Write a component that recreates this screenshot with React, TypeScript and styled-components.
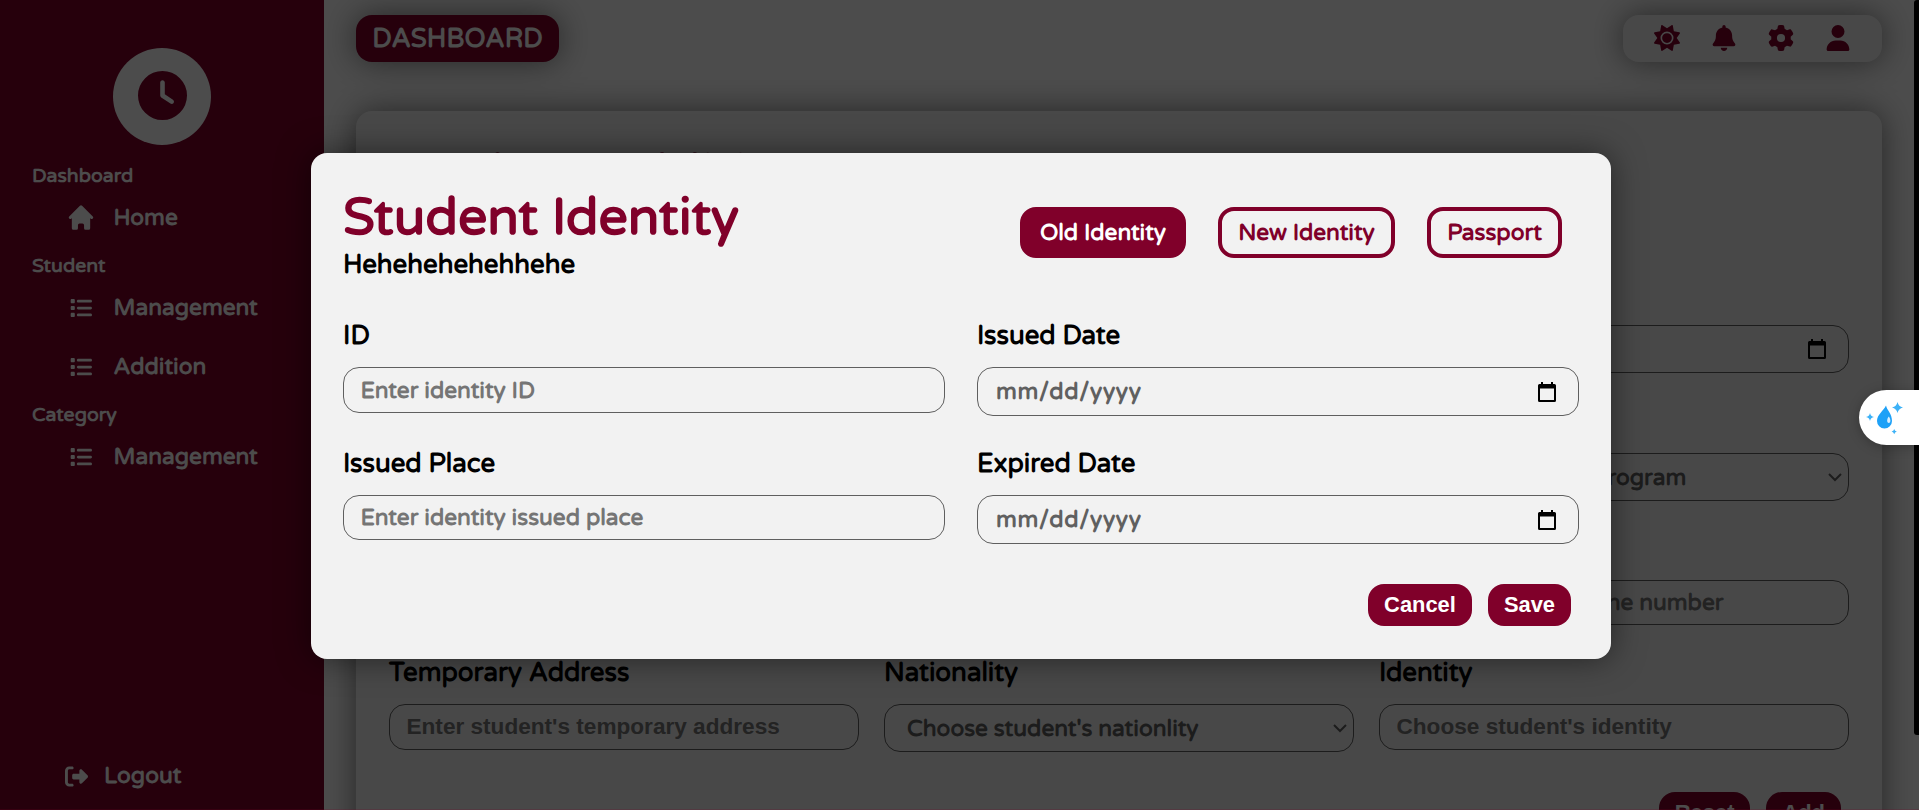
import React from "react";
import styled, { createGlobalStyle, css } from "styled-components";
import { FaSun, FaBell, FaGear, FaUser, FaList, FaRightFromBracket, FaClock } from "react-icons/fa6";
import { HiHome } from "react-icons/hi";

const maroon = "#80002a";
const round = `"Varela Round", "Open Sans", sans-serif`;
const arial = `Arial, "Liberation Sans", sans-serif`;

const GlobalStyle = createGlobalStyle`
  * { box-sizing: border-box; }
  html, body { margin: 0; height: 100%; overflow: hidden; }
  body { font-family: ${round}; font-weight: 700; background: #fff; color: #000; }
  h1, p { margin: 0; }
`;

const Page = styled.div`
  display: flex;
  height: 810px;
  overflow: hidden;
`;

/* Sidebar */
const Sidebar = styled.aside`
  width: 324px;
  flex: none;
  padding: 48px 0 0;
  background: ${maroon};
  color: #fff;
  display: flex;
  flex-direction: column;
`;
const Logo = styled.div`
  width: 98px;
  height: 97px;
  margin: 0 auto 13px;
  border-radius: 50%;
  background: #fff;
  color: ${maroon};
  display: flex;
  align-items: center;
  justify-content: center;
  svg { width: 49px; height: 49px; margin-top: -2px; }
`;
const GroupLabel = styled.div`
  height: 30px;
  padding: 5px 0 0 32px;
  line-height: 27px;
  font-size: 19.5px;
`;
const NavItem = styled.a`
  height: 59.7px;
  padding-left: 68px;
  display: flex;
  align-items: center;
  gap: 19.5px;
  font-size: 22.7px;
  line-height: 30px;
  svg { width: 26px; flex: none; }
`;
const Logout = styled.a`
  margin-top: auto;
  padding: 0 0 19px 65px;
  display: flex;
  align-items: center;
  gap: 16px;
  font-size: 22.7px;
  line-height: 30px;
`;

/* Main area */
const Main = styled.main`
  flex: 1;
  padding: 15px 37px 0 32px;
  background: #fff;
`;
const TopBar = styled.header`
  display: flex;
  justify-content: space-between;
  margin-bottom: 49px;
`;
const lifted = css`box-shadow: 0 0 32px rgba(0, 0, 0, 0.5);`;
const PageBadge = styled.div`
  height: 47px;
  width: 203px;
  border-radius: 16px;
  background: ${maroon};
  color: #fff;
  font-size: 26px;
  line-height: 47px;
  text-align: center;
  ${lifted}
`;
const Tools = styled.div`
  height: 47px;
  width: 259px;
  padding: 0 31px 1px;
  border-radius: 16px;
  background: #f2f2f2;
  color: ${maroon};
  font-size: 26px;
  display: flex;
  align-items: center;
  justify-content: space-between;
  ${lifted}
`;
const Card = styled.section`
  height: 800px;
  padding: 32px 33px 0;
  border-radius: 16px;
  background: #f2f2f2;
  ${lifted}
`;
const Title = styled.h1`
  font-size: 51.9px;
  line-height: 64px;
  font-weight: 700;
  color: ${maroon};
`;
const Subtitle = styled.p`
  font-size: 25.9px;
  line-height: 30px;
`;
const CardHeader = styled.div`height: 134px;`;
const CardGrid = styled.div`
  display: grid;
  grid-template-columns: repeat(3, 1fr);
  grid-template-rows: 128px 127px 124px 136px;
  column-gap: 25px;
`;
const Field = styled.label`
  display: flex;
  flex-direction: column;
`;
const Caption = styled.span`
  font-size: 25.9px;
  line-height: 32px;
  padding-top: 1px;
  margin-bottom: 15px;
  white-space: nowrap;
`;
const box = css`
  width: 100%;
  border: 1px solid #5f5f5f;
  border-radius: 16px;
  background: transparent;
  font-size: 22.7px;
  font-weight: 700;
`;
const TextInput = styled.input<{ $plain?: boolean; $height: number }>`
  ${box}
  height: ${(p) => p.$height}px;
  padding: 0 16.5px;
  outline: none;
  font-family: ${(p) => (p.$plain ? arial : round)};
  font-size: ${(p) => (p.$plain ? 22.6 : 22.7)}px;
  &::placeholder { color: #757575; opacity: 1; }
`;
const Picker = styled.div<{ $height: number; $left: number; $right: number; $spaced?: boolean }>`
  ${box}
  height: ${(p) => p.$height}px;
  padding: 0 ${(p) => p.$right}px 0 ${(p) => p.$left}px;
  display: flex;
  align-items: center;
  justify-content: space-between;
  color: #606060;
  letter-spacing: ${(p) => (p.$spaced ? "0.7px" : "0")};
  svg { flex: none; }
`;
const Actions = styled.div<{ $right: number }>`
  display: flex;
  justify-content: flex-end;
  gap: 16px;
  padding-right: ${(p) => p.$right}px;
`;
const Action = styled.button`
  height: 42px;
  padding: 0 16px;
  border: 0;
  border-radius: 16px;
  background: ${maroon};
  color: #fff;
  font: 700 21.9px ${arial};
`;

/* Modal */
const Backdrop = styled.div`
  position: absolute;
  inset: 0;
  width: 1919px;
  height: 810px;
  background: rgba(0, 0, 0, 0.7);
  border-bottom: 1px solid rgba(128, 0, 42, 0.2);
  padding: 153px 0 0 311px;
`;
const Modal = styled.section`
  width: 1300px;
  height: 506px;
  padding: 33px 32px 33px;
  border-radius: 16px;
  background: #f2f2f2;
  box-shadow: 0 0 32px rgba(0, 0, 0, 0.5);
`;
const ModalHeader = styled.div`
  display: flex;
  justify-content: space-between;
  height: 133px;
`;
const Tabs = styled.div`
  display: flex;
  gap: 32px;
  padding: 21px 17px 0 0;
`;
const Tab = styled.button<{ $width: number; $active?: boolean }>`
  width: ${(p) => p.$width}px;
  height: 51px;
  padding: 0;
  border: 4px solid ${maroon};
  border-radius: 16px;
  background: ${(p) => (p.$active ? maroon : "transparent")};
  color: ${(p) => (p.$active ? "#fff" : maroon)};
  font: 700 22.7px ${round};
`;
const ModalGrid = styled.div`
  display: grid;
  grid-template-columns: 1fr 1fr;
  grid-auto-rows: 128px;
  column-gap: 32px;
  margin-bottom: 9px;
`;

/* Overlays at the window edge */
const ScrollThumb = styled.div`
  position: absolute;
  left: 1914px;
  top: 0;
  width: 5px;
  height: 735px;
  border-radius: 3px 0 0 3px;
  background: #000;
`;
const SideWidget = styled.div`
  position: absolute;
  left: 1859px;
  top: 390px;
  width: 60px;
  height: 55px;
  border-radius: 28px 0 0 28px;
  background: #fff;
  box-shadow: 0 2px 12px rgba(0, 0, 0, 0.25);
  svg { display: block; }
`;

const Calendar = () => (
  <svg width="18" height="20" viewBox="0 0 18 20">
    <path d="M3 0h2v2h8V0h2v2h1.5A1.5 1.5 0 0 1 18 3.5v15a1.5 1.5 0 0 1-1.500 1.500h-15A1.500 1.500 0 0 1 0 18.500v-15A1.500 1.500 0 0 1 1.500 2H3zM2 6.500V18h14V6.500z" fill="#000" fillRule="evenodd" />
  </svg>
);
const Chevron = () => (
  <svg width="14" height="9" viewBox="0 0 14 9">
    <path d="M1 1l6 6 6-6" fill="none" stroke="#606060" strokeWidth="2" />
  </svg>
);

const DateField = ({ label, height = 49, right = 22 }: { label: string; height?: number; right?: number }) => (
  <Field>
    <Caption>{label}</Caption>
    <Picker $height={height} $left={18} $right={right} $spaced>
      mm/dd/yyyy
      <Calendar />
    </Picker>
  </Field>
);
const SelectField = ({ label, text }: { label: string; text: string }) => (
  <Field>
    <Caption>{label}</Caption>
    <Picker $height={48} $left={22} $right={6}>
      {text}
      <Chevron />
    </Picker>
  </Field>
);
const TextField = ({ label, text, plain, height = 46 }: { label: string; text: string; plain?: boolean; height?: number }) => (
  <Field>
    <Caption>{label}</Caption>
    <TextInput placeholder={text} $plain={plain} $height={height} />
  </Field>
);

export default function App() {
  return (
    <>
      <GlobalStyle />
      <Page>
        <Sidebar>
          <Logo><FaClock /></Logo>
          <GroupLabel>Dashboard</GroupLabel>
          <NavItem><HiHome size={31} viewBox="1.5 1.5 17 17" />Home</NavItem>
          <GroupLabel>Student</GroupLabel>
          <NavItem><FaList size={22} />Management</NavItem>
          <NavItem><FaList size={22} />Addition</NavItem>
          <GroupLabel>Category</GroupLabel>
          <NavItem><FaList size={22} />Management</NavItem>
          <Logout><FaRightFromBracket size={23} />Logout</Logout>
        </Sidebar>
        <Main>
          <TopBar>
            <PageBadge>DASHBOARD</PageBadge>
            <Tools>
              <FaSun />
              <FaBell />
              <FaGear />
              <FaUser />
            </Tools>
          </TopBar>
          <Card>
            <CardHeader><Title>Student Addition</Title></CardHeader>
            <CardGrid>
              <TextField label="First Name" text="Enter student's first name" />
              <TextField label="Last Name" text="Enter student's last name" />
              <DateField label="Birthday" height={48} right={22} />
              <TextField label="Email" text="Enter student's email" />
              <SelectField label="Faculty" text="Choose faculty" />
              <SelectField label="Program" text="Choose student's program" />
              <TextField label="Permanent Address" text="Enter permanent address" />
              <SelectField label="Gender" text="Choose student's gender" />
              <TextField label="Phone" text="Enter student's phone number" height={45} />
              <TextField label="Temporary Address" text="Enter student's temporary address" plain />
              <SelectField label="Nationality" text="Choose student's nationlity" />
              <TextField label="Identity" text="Choose student's identity" plain />
            </CardGrid>
            <Actions $right={8}>
              <Action>Reset</Action>
              <Action>Add</Action>
            </Actions>
          </Card>
        </Main>
      </Page>
      <Backdrop>
        <Modal>
          <ModalHeader>
            <div>
              <Title>Student Identity</Title>
              <Subtitle>Hehehehehehhehe</Subtitle>
            </div>
            <Tabs>
              <Tab $width={166} $active>Old Identity</Tab>
              <Tab $width={177}>New Identity</Tab>
              <Tab $width={135}>Passport</Tab>
            </Tabs>
          </ModalHeader>
          <ModalGrid>
            <TextField label="ID" text="Enter identity ID" />
            <DateField label="Issued Date" />
            <TextField label="Issued Place" text="Enter identity issued place" height={45} />
            <DateField label="Expired Date" />
          </ModalGrid>
          <Actions $right={8}>
            <Action>Cancel</Action>
            <Action>Save</Action>
          </Actions>
        </Modal>
      </Backdrop>
      <ScrollThumb />
      <SideWidget>
        <svg width="60" height="55" viewBox="0 0 60 55">
          <path d="M27 15.500c1 5 6 8 6 15.500a7.500 7.500 0 0 1-15 0c0-6.500 6.500-10 9-15.500z" fill="#1ea1f7" />
          <path d="M29.800 26.500c2 2.500 2.200 6.500 0 6.500s-2.200-4 0-6.500z" fill="#d9efff" />
          <g fill="#3db2f7">
            <path d="M38.500 12q1 4.500 5.500 5.500-4.500 1-5.500 5.500-1-4.500-5.500-5.500 4.500-1 5.500-5.500z" />
            <path d="M11 23q.6 3.400 4 4-3.400.6-4 4-.6-3.400-4-4 3.400-.6 4-4z" />
            <path d="M35.200 39q.5 2.100 2.600 2.600-2.100.5-2.600 2.600-.5-2.100-2.600-2.600 2.100-.5 2.600-2.600z" />
          </g>
        </svg>
      </SideWidget>
    </>
  );
}
